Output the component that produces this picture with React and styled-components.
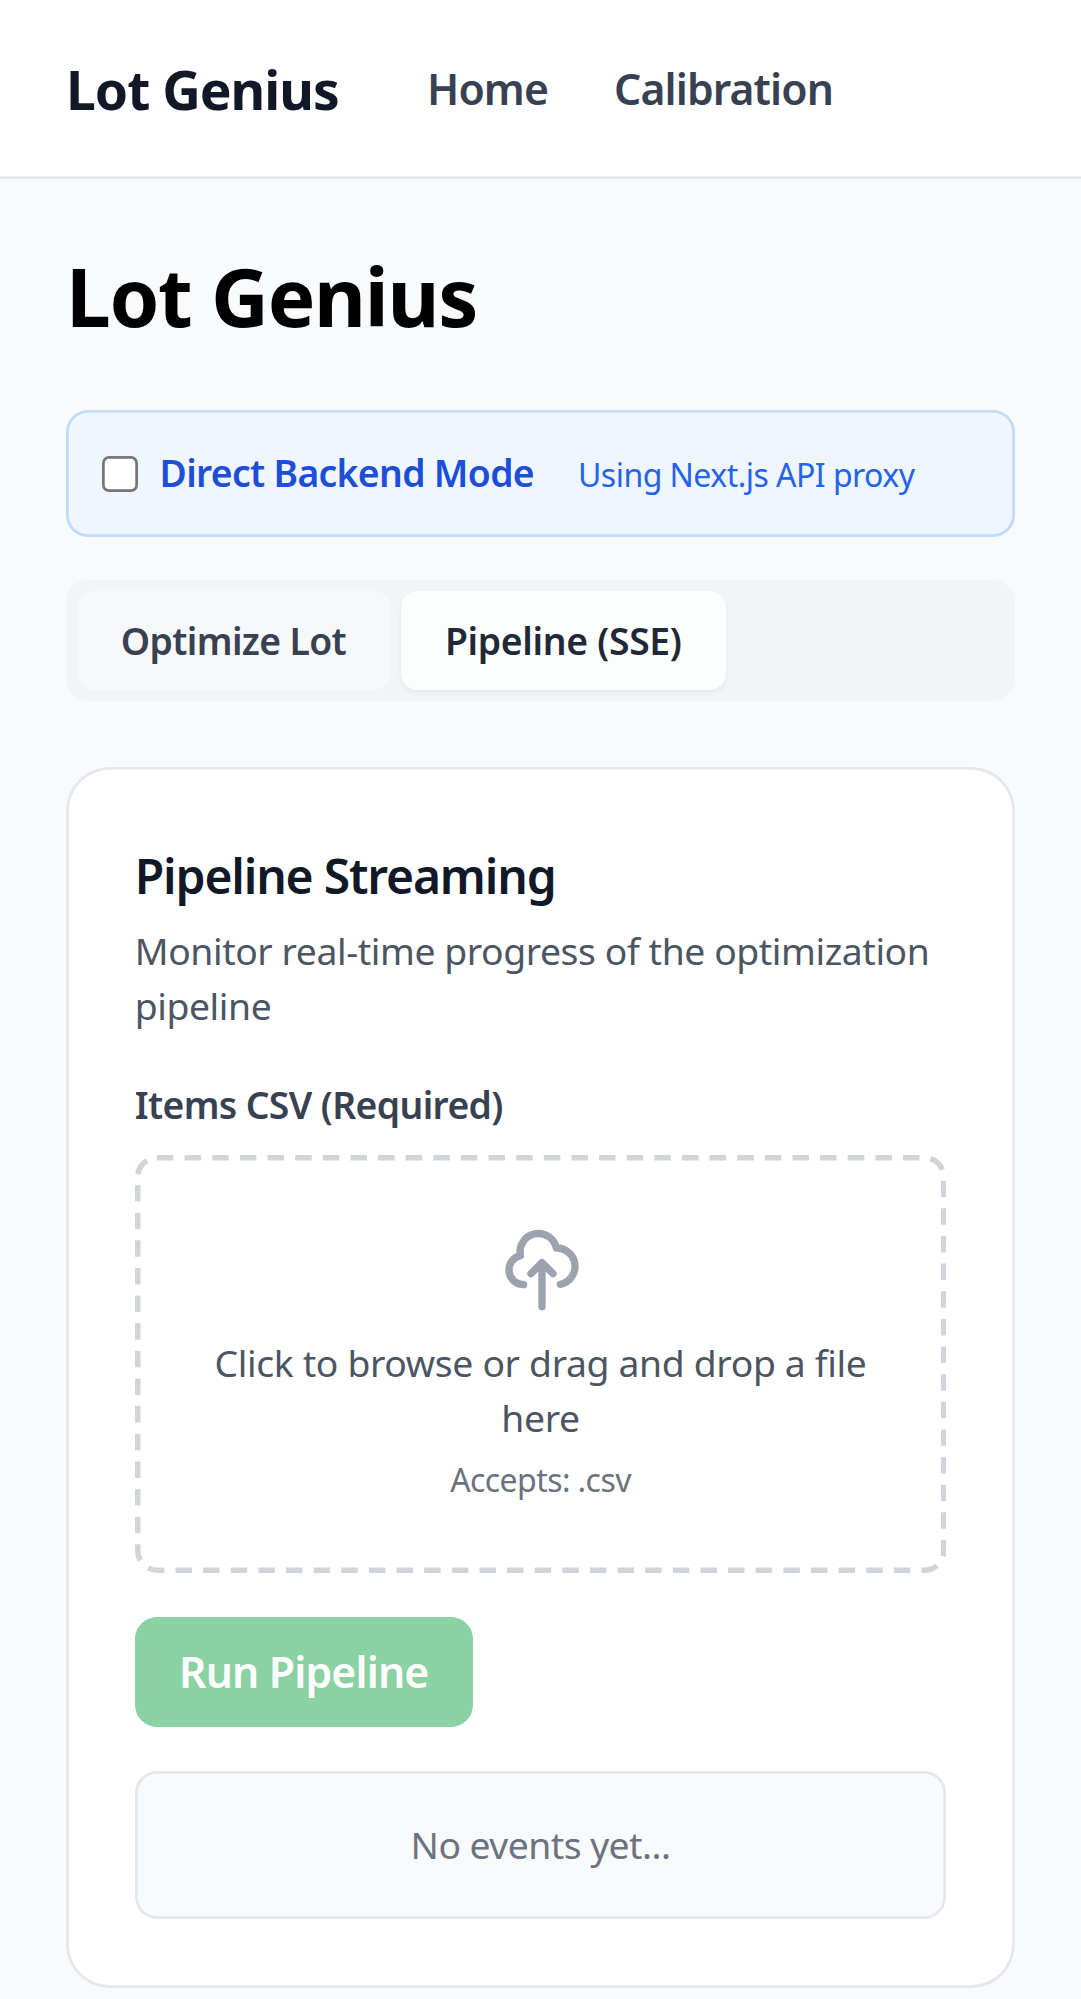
import React, { useState } from "react";
import styled, { createGlobalStyle, css } from "styled-components";

const GlobalStyle = createGlobalStyle`
  *, *::before, *::after { box-sizing: border-box; }
  body {
    margin: 0;
    background: #f9fafc;
    font-family: "Noto Sans", "Open Sans", "Liberation Sans", sans-serif;
    color: #000;
  }
  h1, h2, p { margin: 0; }
`;

/* Hairline drawn inside the box; keeps fractional thickness. */
const hairline = (color) => css`
  box-shadow: inset 0 0 0 2.75px ${color};
`;

const Page = styled.div`
  min-height: 1999px;
  background: #f9fafc;
`;

const Header = styled.header`
  display: flex;
  align-items: center;
  gap: 88px;
  height: 178.75px;
  padding: 0 66px 2.75px;
  background: #fff;
  box-shadow: inset 0 -2.75px 0 #e5e7eb;
`;

const Brand = styled.div`
  padding-top: 3px;
  width: 273px;
  font-size: 53.4px;
  line-height: 77px;
  font-weight: 700;
  letter-spacing: -1.03px;
  color: #111827;
  white-space: nowrap;
`;

const Nav = styled.nav`
  display: flex;
  gap: 66px;
`;

const NavLink = styled.a`
  padding-top: 2px;
  font-size: 42.7px;
  line-height: 66px;
  font-weight: 600;
  letter-spacing: -0.88px;
  color: #374151;
  text-decoration: none;
`;

const Main = styled.main`
  padding: 65.25px 66px 0;
`;

const Title = styled.h1`
  font-size: 80px;
  line-height: 99px;
  font-weight: 700;
  letter-spacing: -1.3px;
  padding-top: 2px;
  margin-bottom: 65px;
`;

const ModeBar = styled.div`
  display: flex;
  align-items: center;
  height: 126.5px;
  padding: 0 35.75px;
  border-radius: 22px;
  background: #eff6ff;
  ${hairline("#bfdbfe")}
`;

const Checkbox = styled.input`
  appearance: none;
  flex: none;
  width: 35.75px;
  height: 35.75px;
  margin: 2px 22px 0 0;
  border-radius: 7px;
  background: #fff;
  ${hairline("#767676")}
`;

const ModeLabel = styled.label`
  width: 374.5px;
  margin-right: 44px;
  padding-bottom: 2px;
  font-size: 37.3px;
  line-height: 55px;
  font-weight: 600;
  letter-spacing: -0.67px;
  color: #1d4ed8;
  white-space: nowrap;
`;

const ModeHint = styled.span`
  font-size: 32px;
  line-height: 44px;
  letter-spacing: -0.53px;
  color: #2563eb;
  white-space: nowrap;
  padding-top: 4px;
`;

const TabList = styled.div`
  display: flex;
  gap: 11px;
  height: 121px;
  margin-top: 43.5px;
  padding: 11px;
  border-radius: 22px;
  background: #f3f4f6;
`;

const Tab = styled.button`
  width: ${(p) => p.$width}px;
  height: 99px;
  padding: 0 0 1px;
  border: 0;
  border-radius: 16.5px;
  background: ${(p) => (p.$active ? "#fcfefd" : "#f7f8f9")};
  box-shadow: ${(p) => (p.$active ? "0 2.75px 5.5px rgba(0, 0, 0, 0.05)" : "none")};
  font: 600 37.3px/55px "Noto Sans", "Open Sans", sans-serif;
  letter-spacing: ${(p) => p.$tracking}px;
  color: ${(p) => (p.$active ? "#1f2937" : "#374151")};
  white-space: nowrap;
`;

const Card = styled.section`
  margin-top: 66px;
  padding: 68.75px;
  height: 1220.5px;
  border-radius: 44px;
  background: #fff;
  ${hairline("#e5e7eb")}
`;

const CardTitle = styled.h2`
  padding-top: 1px;
  font-size: 48px;
  line-height: 77px;
  font-weight: 600;
  letter-spacing: -1.17px;
  color: #111827;
`;

const CardText = styled.p`
  margin: 9px -20px 44px 0;
  font-size: 37.3px;
  line-height: 55px;
  letter-spacing: -0.42px;
  color: #4b5563;
`;

const FieldLabel = styled.div`
  margin-bottom: 23px;
  font-size: 37.3px;
  line-height: 55px;
  font-weight: 600;
  letter-spacing: -0.62px;
  color: #374151;
`;

const DropZone = styled.div`
  position: relative;
  display: flex;
  flex-direction: column;
  align-items: center;
  height: 418px;
  padding: 71.5px 60px;
  text-align: center;
`;

const DashedFrame = styled.svg`
  position: absolute;
  inset: 0;
  width: 100%;
  height: 100%;
`;

const UploadIcon = styled.svg`
  flex: none;
  width: 88px;
  height: 88px;
  margin: 0 0 21px 2px;
  color: #9ca3af;
`;

const DropText = styled.p`
  font-size: 37.3px;
  line-height: 55px;
  letter-spacing: -0.34px;
  color: #4b5563;
`;

const DropHint = styled.p`
  padding-top: 1px;
  margin-top: 12px;
  font-size: 32px;
  line-height: 44px;
  letter-spacing: -0.58px;
  color: #6b7280;
`;

const RunButton = styled.button`
  display: block;
  width: 338px;
  height: 110px;
  margin-top: 44px;
  padding: 1px 0 0;
  border: 0;
  border-radius: 22px;
  background: #8ad1a4;
  font: 600 42.7px/66px "Noto Sans", "Open Sans", sans-serif;
  letter-spacing: -0.84px;
  color: #fff;
`;

const EventLog = styled.div`
  display: flex;
  align-items: center;
  justify-content: center;
  height: 148.5px;
  margin-top: 44px;
  padding-bottom: 2px;
  border-radius: 22px;
  background: #f9fafb;
  ${hairline("#e5e7eb")}
`;

const EmptyNote = styled.span`
  font-size: 37.3px;
  line-height: 55px;
  letter-spacing: -0.54px;
  color: #6b7280;
`;

const TABS = [
  { id: "optimize", label: "Optimize Lot", width: 313, tracking: -0.63 },
  { id: "pipeline", label: "Pipeline (SSE)", width: 324.5, tracking: -0.31 },
];

export default function App() {
  const [tab, setTab] = useState("pipeline");
  return (
    <Page>
      <GlobalStyle />
      <Header>
        <Brand>Lot Genius</Brand>
        <Nav>
          <NavLink>Home</NavLink>
          <NavLink>Calibration</NavLink>
        </Nav>
      </Header>
      <Main>
        <Title>Lot Genius</Title>
        <ModeBar>
          <Checkbox type="checkbox" id="direct" />
          <ModeLabel htmlFor="direct">Direct Backend Mode</ModeLabel>
          <ModeHint>Using Next.js API proxy</ModeHint>
        </ModeBar>
        <TabList>
          {TABS.map((t) => (
            <Tab
              key={t.id}
              $width={t.width}
              $tracking={t.tracking}
              $active={t.id === tab}
              onClick={() => setTab(t.id)}
            >
              {t.label}
            </Tab>
          ))}
        </TabList>
        <Card>
          <CardTitle>Pipeline Streaming</CardTitle>
          <CardText>Monitor real-time progress of the optimization pipeline</CardText>
          <FieldLabel>Items CSV (Required)</FieldLabel>
          <DropZone>
            <DashedFrame viewBox="0 0 811.5 418" fill="none" aria-hidden="true">
              <rect
                x="2.75"
                y="2.75"
                width="806"
                height="412.5"
                rx="19.25"
                stroke="#d1d5db"
                strokeWidth="5.5"
                strokeDasharray="16.5 11.13"
              />
            </DashedFrame>
            <UploadIcon
              viewBox="0 0 24 24"
              fill="none"
              stroke="currentColor"
              strokeWidth="2"
              strokeLinecap="round"
              strokeLinejoin="round"
            >
              <path d="M7 16a4 4 0 01-.88-7.903A5 5 0 1115.9 6L16 6a5 5 0 011 9.9M15 13l-3-3m0 0l-3 3m3-3v12" />
            </UploadIcon>
            <DropText>Click to browse or drag and drop a file here</DropText>
            <DropHint>Accepts: .csv</DropHint>
          </DropZone>
          <RunButton>Run Pipeline</RunButton>
          <EventLog>
            <EmptyNote>No events yet...</EmptyNote>
          </EventLog>
        </Card>
      </Main>
    </Page>
  );
}
